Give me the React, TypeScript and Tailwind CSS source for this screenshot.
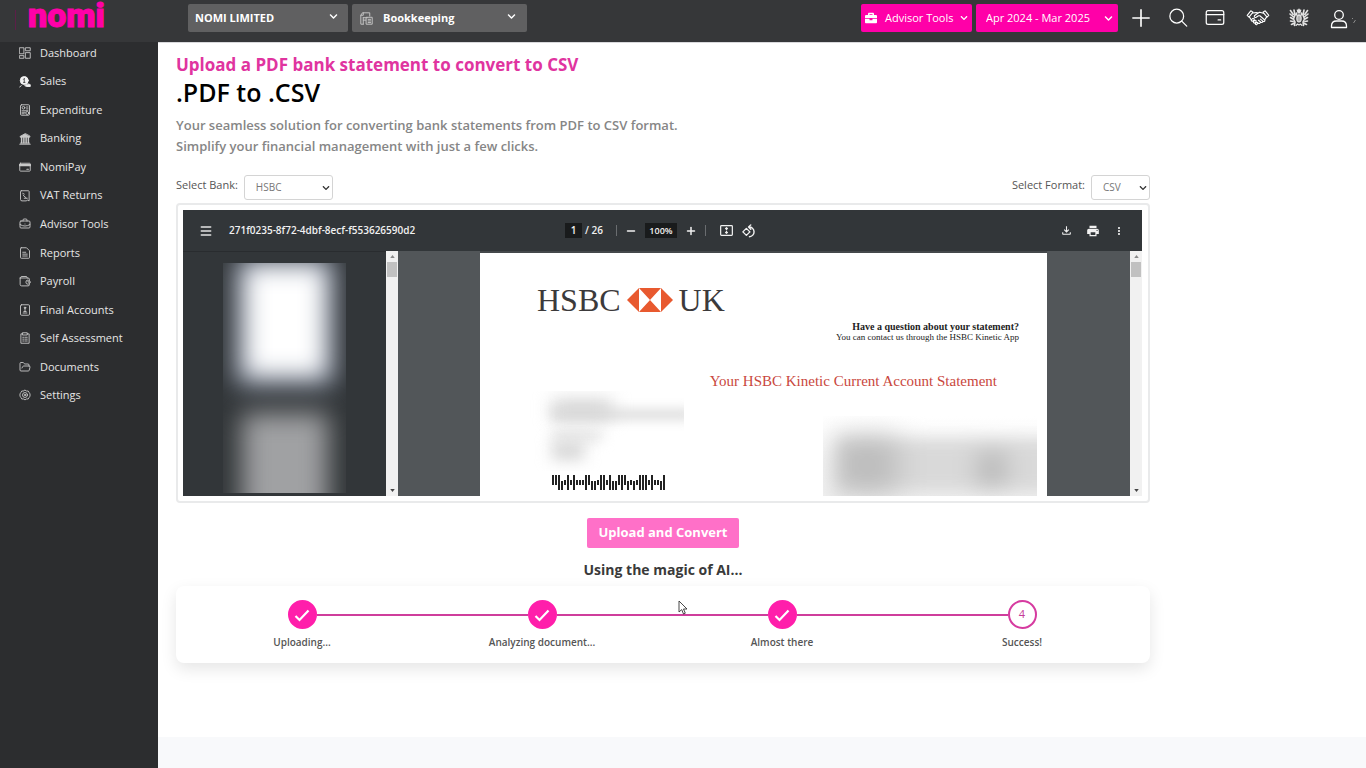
import type { ReactNode } from "react";
import { FaBriefcase, FaChevronDown } from "react-icons/fa";
import { BriefcaseBusiness, FolderOpen, Menu, Minus, Plus } from "lucide-react";
import { MdMoreVert, MdOutlineFileDownload, MdPrint } from "react-icons/md";

function Icon({ children, className = "size-[12px]", sw = 1.2 }: { children: ReactNode; className?: string; sw?: number }) {
  return (
    <svg viewBox="0 0 16 16" className={className} fill="none" stroke="currentColor" strokeWidth={sw} strokeLinecap="round" strokeLinejoin="round" aria-hidden="true">
      {children}
    </svg>
  );
}

const navItems: { label: string; icon: ReactNode }[] = [
  {
    label: "Dashboard",
    icon: (
      <Icon>
        <rect x="1" y="1" width="5.5" height="8" />
        <rect x="1" y="11.5" width="5.5" height="3.5" />
        <rect x="9" y="1" width="6" height="4" />
        <rect x="9" y="7.5" width="6" height="7.5" />
      </Icon>
    ),
  },
  {
    label: "Sales",
    icon: (
      <Icon>
        <circle cx="7" cy="6" r="5.3" fill="#f2f2f2" stroke="#f2f2f2" />
        <path d="M7 3.500v5M6 4.500l1-1M6 8.500h2" stroke="#2c2d2f" strokeWidth="1" />
        <path d="M1 14.500l2-1.500M12 10.500l3 1v2.500h-5l-2-1z" stroke="#f2f2f2" fill="#f2f2f2" />
      </Icon>
    ),
  },
  {
    label: "Expenditure",
    icon: (
      <Icon>
        <rect x="2" y="1" width="12" height="14" rx="1.5" />
        <circle cx="6" cy="5" r="1.8" />
        <path d="M10 4h2M10 6.500h2M4 9h8M4 11h4M4 13h3" />
        <circle cx="11" cy="12" r="2" />
      </Icon>
    ),
  },
  {
    label: "Banking",
    icon: (
      <Icon>
        <path d="M8 1L1.500 4.500v1h13v-1zM2 13.500h12M1 15h14" fill="currentColor" />
        <path d="M3.500 6v7M6.500 6v7M9.500 6v7M12.500 6v7" strokeWidth="2" />
      </Icon>
    ),
  },
  {
    label: "NomiPay",
    icon: (
      <Icon>
        <rect x="1" y="3" width="14" height="10.5" rx="1" />
        <path d="M1 5.500h14" strokeWidth="3" />
        <path d="M10.500 11h2" strokeWidth="1.5" />
      </Icon>
    ),
  },
  {
    label: "VAT Returns",
    icon: (
      <Icon>
        <path d="M3 1h9.500a1 1 0 011 1v12.500l-2-1-2 1H4a2 2 0 01-2-2V2a1 1 0 011-1z" />
        <path d="M5 4.500l2 1M5.500 7l4 3.500M7 11h4" />
      </Icon>
    ),
  },
  { label: "Advisor Tools", icon: <BriefcaseBusiness size={12} strokeWidth={1.8} /> },
  {
    label: "Reports",
    icon: (
      <Icon>
        <path d="M3 1h7l4 4v9a1 1 0 01-1 1H3a1 1 0 01-1-1V2a1 1 0 011-1z" />
        <path d="M5 7h4M5 9.500h6M5 12h6" />
      </Icon>
    ),
  },
  {
    label: "Payroll",
    icon: (
      <Icon>
        <path d="M1.500 4h10.500a2 2 0 012 2v1M1.500 4v8.500a2 2 0 002 2H12a2 2 0 002-2V12M2 4l1-2h7l1 2" />
        <circle cx="12" cy="9.5" r="2.8" />
        <path d="M12 8.500v1h1" />
      </Icon>
    ),
  },
  {
    label: "Final Accounts",
    icon: (
      <Icon>
        <rect x="2" y="1" width="12" height="14" rx="1.5" />
        <circle cx="8" cy="5" r="1" fill="currentColor" />
        <path d="M8 6v4M5.500 12h5M6.500 10h3" />
      </Icon>
    ),
  },
  {
    label: "Self Assessment",
    icon: (
      <Icon>
        <path d="M5 2.500H2.500v12.500h11V2.500H11M5 1h6v3H5z" />
        <path d="M5 7h1.500M8 7h3M5 9.500h1.500M8 9.500h3M5 12h1.500M8 12h3" />
      </Icon>
    ),
  },
  { label: "Documents", icon: <FolderOpen size={12} strokeWidth={1.8} /> },
  {
    label: "Settings",
    icon: (
      <Icon>
        <path d="M8 1.500l2 1.200 2.300 0 1.200 2 1.200 1.800v3l-1.200 1.800-1.200 2H10L8 14.500l-2-1.200H3.700l-1.200-2L1.300 9.500v-3l1.200-1.800 1.200-2H6z" />
        <circle cx="8" cy="8" r="3.3" />
        <circle cx="8" cy="8" r="1" />
      </Icon>
    ),
  },
];

function Chevron({ className }: { className: string }) {
  return <FaChevronDown aria-hidden="true" className={`pointer-events-none absolute ${className}`} />;
}

function Logo() {
  return (
    <a href="#home" aria-label="nomi home" className="ml-[12px]">
      <svg viewBox="0 0 80 34" className="h-[34px] w-[80px] overflow-visible">
        <text x="0" y="27" fill="#ff00a8" stroke="#ff00a8" strokeWidth="1" className="font-['Roboto'] text-[34px] font-black">
          nomi
        </text>
      </svg>
    </a>
  );
}

function Header() {
  return (
    <header className="flex h-[42px] items-start bg-[#363739] text-[11px] text-white">
      <div className="flex w-[188px] shrink-0 items-start pl-[15px]">
        <span className="mt-[10px] h-5 w-px bg-[#5c1f48]" />
        <Logo />
      </div>
      <div className="flex gap-1 pt-1">
        <div className="relative">
          <select aria-label="Company" className="block h-7 w-[160px] appearance-none rounded-[2px] bg-[#606061] px-[7px] text-[11px] font-bold">
            <option>NOMI LIMITED</option>
          </select>
          <Chevron className="top-[8px] right-[10px] size-[9px]" />
        </div>
        <div className="relative">
          <Icon className="pointer-events-none absolute top-[8px] left-[8px] size-[13px] text-[#c4c4c4]">
            <path d="M4 15H1V4l2-3h9v4M1 4h3V1M4 7h5M4 10h3M4 7v8" />
            <rect x="8" y="6.5" width="7" height="8.5" />
            <path d="M10 9h3M10 11h3M10 13h3" />
          </Icon>
          <select aria-label="Module" className="block h-7 w-[175px] appearance-none rounded-[2px] bg-[#606061] pl-[31px] text-[11px] font-bold">
            <option>Bookkeeping</option>
          </select>
          <Chevron className="top-[8px] right-[11px] size-[9px]" />
        </div>
      </div>
      <div className="ml-auto flex gap-1 pt-1 pr-[6px]">
        <button type="button" className="flex h-7 w-[111px] items-center rounded-[2px] bg-[#ff00a8] pl-[4px]">
          <FaBriefcase className="size-[12px]" />
          <span className="ml-2 whitespace-nowrap">Advisor Tools</span>
          <FaChevronDown className="ml-auto mr-[4px] size-[8px]" />
        </button>
        <div className="relative">
          <select aria-label="Period" className="block h-7 w-[142px] appearance-none rounded-[2px] bg-[#ff00a8] px-[10px] text-[11px]">
            <option>Apr 2024 - Mar 2025</option>
          </select>
          <Chevron className="top-[10px] right-[5px] size-[9px]" />
        </div>
        <div className="flex">
          <button type="button" aria-label="Add" className="flex h-7 w-[37px] items-center justify-center">
            <Icon className="size-[20px]" sw={1.3}><path d="M8 1.500v13M1.500 8h13" /></Icon>
          </button>
          <button type="button" aria-label="Search" className="flex h-7 w-[37px] items-center justify-center">
            <Icon className="size-[20px]" sw={1}><circle cx="7" cy="6.5" r="5.5" /><path d="M11 10.500l4 4" /></Icon>
          </button>
          <button type="button" aria-label="Payments" className="flex h-7 w-[37px] items-center justify-center">
            <Icon className="size-[20px]" sw={1}><rect x="1" y="2" width="14" height="11" rx="1.5" /><path d="M1 5.200h14M10.500 9.500h2" /></Icon>
          </button>
        </div>
        <div className="flex">
          <button type="button" aria-label="Partners" className="flex h-7 w-[41px] items-center justify-center">
            <svg viewBox="0 0 26 20" className="h-[18px] w-[24px]" fill="none" stroke="currentColor" strokeWidth="1.2" strokeLinejoin="round" strokeLinecap="round">
              <path d="M5 2L1 7l2 2 4.500-5.500zM21 2l4 5-2 2-4.500-5.500z" />
              <path d="M7 4.500l4-.5 2 .5 2-1 4 1.200M3.500 9l2 3M22.500 9l-2 3" />
              <path d="M13 4.500L9 7.500c-.5 1.500.8 2.300 2 1.700l2.500-1.700h1.500l5.500 4.700c.8 1.400-.8 2.300-1.800 1.500l-3-2.400M18 13.200c.8 1.500-.8 2.300-1.800 1.500l-2.700-2.200M15.500 14.200c.5 1.500-1 2.500-2.200 1.600l-1.300-1" />
              <path d="M5.500 12l1.700-1.500c1.200-.6 2.200.6 1.400 1.600l-1 1.200c-1 .6-2.500-.3-2.100-1.300zM8 14l1.500-1.300c1.200-.5 2 .7 1.200 1.600l-1 1.200c-1 .5-2.200-.5-1.700-1.500zM10.300 16l1-.9c1.200-.4 1.800.7 1 1.500l-.8.8c-.9.400-1.700-.500-1.200-1.400z" />
            </svg>
          </button>
          <button type="button" aria-label="HMRC" className="flex h-7 w-[41px] items-center justify-center">
            <svg viewBox="0 0 20 20" className="size-[20px]" fill="none" stroke="#e4e4e4" strokeWidth="1.1" strokeLinecap="round" strokeLinejoin="round">
              <path d="M9 4.500l-.8-2.500 1.100.8L10 1l.7 1.800 1.100-.8L11 4.500z" fill="#e4e4e4" />
              <ellipse cx="10" cy="10.5" rx="2.2" ry="3.4" fill="#b0b0b0" />
              <path d="M9 6h2" />
              <path d="M1.500 2.500l2.700 4M1 6l3 2.500M1.500 9.500l2.500 1.500M1.500 13l2.500.5M2.500 16.500l3-1.500M5 2l1 5M6 7l-1.500 4 1.500 3-.5 3.500M7.500 5v2" strokeWidth="1.6" />
              <path d="M18.500 2.500l-2.700 4M19 6l-3 2.500M18.500 9.500l-2.500 1.500M18.500 13l-2.500.5M17.500 16.500l-3-1.500M15 2l-1 5M14 7l1.500 4-1.500 3 .5 3.500M12.500 5v2" strokeWidth="1.600" />
              <path d="M7 17.500l1.500-1.500 1.500 1 1.500-1 1.500 1.500" />
            </svg>
          </button>
          <button type="button" aria-label="Account" className="flex h-7 w-[41px] items-center pt-[2px] pl-[11px]">
            <svg viewBox="0 0 27 20" className="h-[20px] w-[27px] shrink-0" fill="none" stroke="currentColor" strokeWidth="1.3" strokeLinejoin="round">
              <circle cx="9" cy="6" r="4.3" />
              <path d="M1.500 18.500v-1.500c0-3.500 2.500-5 5-5h5c2.500 0 5 1.500 5 5v1.500z" />
              <path d="M22 9l1 1M25.500 11l-2 3" stroke="#8c8c8c" strokeWidth="1" />
            </svg>
          </button>
        </div>
      </div>
    </header>
  );
}

function Sidebar() {
  return (
    <nav className="w-[158px] shrink-0 bg-[#2c2d2f] pt-px">
      <ul className="grid h-[371px] auto-rows-fr">
        {navItems.map((item) => (
          <li key={item.label}>
            <a href="#nav" className="flex h-5 items-center gap-[9px] pl-[19px] text-[11px] font-medium text-[#e6e6e6]">
              <span className="text-[#c8c8c8]">{item.icon}</span>
              {item.label}
            </a>
          </li>
        ))}
      </ul>
    </nav>
  );
}

function Field({ id, label, value, width }: { id: string; label: string; value: string; width: string }) {
  return (
    <div className="flex items-center gap-[6px]">
      <label htmlFor={id} className="pb-1 text-[11px] text-[#555]">{label}</label>
      <div className="relative">
        <select id={id} className={`block h-[25px] appearance-none rounded-[3px] border border-[#d4d4d4] bg-white pl-[11px] text-[10px] text-[#777] ${width}`}>
          <option>{value}</option>
        </select>
        <Chevron className="top-[9px] right-[3px] size-[8px] text-[#333]" />
      </div>
    </div>
  );
}

function Scrollbar() {
  return (
    <div className="flex w-[12px] shrink-0 flex-col items-center bg-[#f1f1f1] py-1">
      <svg viewBox="0 0 6 4" className="h-[3px] w-[5px] shrink-0" fill="#8a8a8a"><path d="M0 4L3 0l3 4z" /></svg>
      <div className="mt-1 h-[15px] w-[10px] bg-[#c1c1c1]" />
      <svg viewBox="0 0 6 4" className="mt-auto h-[3px] w-[5px] shrink-0" fill="#444"><path d="M0 0l3 4 3-4z" /></svg>
    </div>
  );
}

function PdfToolbar() {
  return (
    <div className="grid h-[41px] grid-cols-[1fr_auto_1fr] items-center bg-[#323639] text-[10px] font-semibold text-[#f1f1f1]">
      <div className="flex items-center gap-[16px] pl-[16px]">
        <button type="button" aria-label="Menu" className="text-[#e4e4e4]"><Menu size={14} strokeWidth={2.6} /></button>
        <span className="whitespace-nowrap">271f0235-8f72-4dbf-8ecf-f553626590d2</span>
      </div>
      <div className="flex items-center pr-[4px]">
        <input aria-label="Page" defaultValue="1" className="h-[15px] w-[17px] bg-[#191b1c] text-center" />
        <span className="ml-[3px]">/ 26</span>
        <span className="ml-[13px] h-[11px] w-px bg-[#6a6d70]" />
        <button type="button" aria-label="Zoom out" className="ml-2"><Minus size={12} strokeWidth={3} /></button>
        <input aria-label="Zoom" defaultValue="100%" className="ml-2 h-[15px] w-[32px] bg-[#191b1c] text-center text-[9px]" />
        <button type="button" aria-label="Zoom in" className="ml-2"><Plus size={12} strokeWidth={3} /></button>
        <span className="ml-2 h-[11px] w-px bg-[#6a6d70]" />
        <button type="button" aria-label="Fit to page" className="ml-[13px]">
          <Icon className="h-[13px] w-[15px]" sw={1.5}><rect x="0.8" y="2" width="14.4" height="12" rx="1" /><path d="M8 4.500v2.500M6.800 5.700L8 4.500l1.200 1.200M8 11.500V9M6.800 10.300L8 11.500l1.200-1.200" /></Icon>
        </button>
        <button type="button" aria-label="Rotate" className="ml-2">
          <Icon className="size-[14px]" sw={1.6}><path d="M5 5L9 9l-4 4-4-4z" /><path d="M8 3.500a5.500 5.500 0 11.500 11M10 1L7.500 3.500 10 6" /></Icon>
        </button>
      </div>
      <div className="flex items-center justify-end gap-[13px] pr-[17px]">
        <button type="button" aria-label="Download"><MdOutlineFileDownload size={13} /></button>
        <button type="button" aria-label="Print"><MdPrint size={14} /></button>
        <button type="button" aria-label="More"><MdMoreVert size={12} /></button>
      </div>
    </div>
  );
}

// Bar shapes: f full, t tall upper, b lower, s short
const bars = "ttfbsfsfsssftbbsffsfbbtftbsbsfffsfssbfff".slice(0, 38).split("");

function Barcode() {
  return (
    <svg viewBox="0 0 114 16" className="ml-[72px] h-[16px] w-[114px]" aria-hidden="true">
      {bars.map((b, i) => {
        const y = b === "f" || b === "t" ? 0 : b === "b" ? 6 : 5;
        const h = b === "f" ? 15 : b === "t" ? 10 : b === "b" ? 9 : 5;
        return <rect key={i} x={i * 3} y={y} width="2" height={h} fill="#222" />;
      })}
    </svg>
  );
}

function StatementPage() {
  return (
    <div className="min-w-0 flex-[567] overflow-hidden border-t-2 border-[#44484b] bg-white font-['Liberation_Serif',serif]">
      <div className="flex items-center gap-[6px] pt-[29px] pl-[57px] text-[32px] leading-9 text-[#3c3a3b]">
        <span>HSBC</span>
        <svg viewBox="0 0 46 24" className="h-[24px] w-[46px]" aria-label="HSBC emblem">
          <path d="M12 0h22l12 12-12 12H12L0 12z" fill="#e8592f" />
          <path d="M12 0v24l11-12zM34 0v24L23 12z" fill="#fff" />
        </svg>
        <span>UK</span>
      </div>
      <div className="mt-[4px] pr-[28px] text-right text-[9px] leading-[10px] text-[#222]">
        <p className="text-[10px] leading-[10px] font-bold">Have a question about your statement?</p>
        <p>You can contact us through the HSBC Kinetic App</p>
      </div>
      <h2 className="mt-[29px] pr-[50px] text-right text-[15px] leading-5 text-[#c9473d]">Your HSBC Kinetic Current Account Statement</h2>
      <div className="flex justify-between pr-[10px]">
        <div>
          <div className="ml-[50px] h-[80px] w-[154px] overflow-hidden pt-[9px] pl-[22px]">
            <div className="h-[18px] w-[60px] bg-[#d2d2d2] blur-[9px]" />
            <div className="-mt-[8px] h-[9px] w-[140px] bg-[#d6d6d6] blur-[6px]" />
            <div className="mt-[12px] h-[9px] w-[50px] bg-[#dcdcdc] blur-[7px]" />
            <div className="mt-[3px] h-[16px] w-[32px] bg-[#d0d0d0] blur-[8px]" />
          </div>
          <div className="mt-[4px]"><Barcode /></div>
        </div>
        <div className="mt-[25px] h-[82px] w-[214px] overflow-hidden bg-gradient-to-b from-white via-[#f7f7f7] to-[#f1f1f1] pt-[22px]">
          <div className="ml-[14px] flex h-[54px] w-[220px] justify-between bg-[#d9d9d9] pr-[50px] blur-[8px]">
            <div className="h-full w-[60px] bg-[#bcbcbc] blur-[12px]" />
            <div className="mt-[14px] h-[34px] w-[30px] bg-[#bababa] blur-[9px]" />
          </div>
        </div>
      </div>
    </div>
  );
}

function PdfViewer() {
  return (
    <section aria-label="Statement preview" className="mt-[3px] rounded-[4px] border-2 border-[#e9eaeb] p-[5px] pr-[6px]">
      <PdfToolbar />
      <div className="flex h-[245px]">
        <div className="flex w-[203px] shrink-0 flex-col items-center overflow-hidden border-t border-[#292c2f] bg-[#323639]">
          <div className="mt-[11px] flex h-[230px] w-[123px] flex-col items-center overflow-hidden">
            <div className="mt-[4px] h-[108px] w-[78px] shrink-0 bg-white shadow-[0_0_10px_9px_#aab5cc] blur-[12px]" />
            <div className="mt-[38px] h-[120px] w-[86px] shrink-0 bg-[#a0a1a3] blur-[13px]" />
          </div>
        </div>
        <Scrollbar />
        <div className="flex min-w-0 flex-1 bg-[#525659]">
          <div className="flex-[82]" />
          <StatementPage />
          <div className="flex-[83]" />
        </div>
        <Scrollbar />
      </div>
    </section>
  );
}

const steps = [
  { label: "Uploading...", done: true },
  { label: "Analyzing document...", done: true },
  { label: "Almost there", done: true },
  { label: "Success!", done: false },
];

function Stepper() {
  return (
    <ol className="relative mt-[5px] flex rounded-[8px] bg-white pt-[14px] pr-[8px] pb-[13px] pl-[6px] shadow-[0_6px_16px_rgba(0,0,0,0.10)]">
      {steps.map((step, i) => (
        <li key={step.label} className="flex flex-1 flex-col items-center">
          <div className="flex w-full items-center">
            <span className={`h-[2px] flex-1 ${i === 0 ? "bg-transparent" : "bg-[#cf3d9c]"}`} />
            <span className={`flex size-[29px] items-center justify-center rounded-full border-2 text-[11px] ${step.done ? "border-[#ff1fab] bg-[#ff1fab] text-white" : "border-[#d63ba0] bg-white text-[#c63b98]"}`}>
              {step.done ? (
                <svg viewBox="0 0 16 16" className="size-[16px]" fill="none" stroke="currentColor" strokeWidth="2.2" aria-hidden="true"><path d="M1.500 9l4 4L14.500 3.500" /></svg>
              ) : (
                i + 1
              )}
            </span>
            <span className={`h-[2px] flex-1 ${i === steps.length - 1 ? "bg-transparent" : "bg-[#cf3d9c]"}`} />
          </div>
          <span className="mt-[5px] text-[10px] leading-4 font-semibold text-[#555]">{step.label}</span>
        </li>
      ))}
      <svg viewBox="0 0 10 15" className="absolute top-[14px] left-[502px] h-[15px] w-[10px]" aria-hidden="true">
        <path d="M1 1v11l2.700-2.400L5.500 14l1.800-.8L5.500 9H9z" fill="#fff" stroke="#333" strokeWidth="0.9" />
      </svg>
    </ol>
  );
}

export default function App() {
  return (
    <div className="flex min-h-screen flex-col bg-white font-['Open_Sans',sans-serif]">
      <Header />
      <div className="flex flex-1">
        <Sidebar />
        <div className="flex min-w-0 flex-1 flex-col border-t border-[#d9d9dc]">
          <main className="w-full max-w-[992px] pt-[11px] pl-[18px]">
            <p className="text-[17px] leading-[22px] font-bold text-[#e0349f]">Upload a PDF bank statement to convert to CSV</p>
            <h1 className="text-[25px] leading-[32px] font-semibold text-black">.PDF to .CSV</h1>
            <p className="mt-[7px] text-[13px] leading-[21px] font-semibold text-[#868686]">
              Your seamless solution for converting bank statements from PDF to CSV format.
              <br />
              Simplify your financial management with just a few clicks.
            </p>
            <div className="mt-[18px] flex justify-between">
              <Field id="bank" label="Select Bank:" value="HSBC" width="w-[89px]" />
              <Field id="format" label="Select Format:" value="CSV" width="w-[59px]" />
            </div>
            <PdfViewer />
            <div className="mt-[15px] flex flex-col items-center">
              <button type="button" className="h-[30px] rounded-[2px] bg-[#ff70c8] px-[11px] text-[13px] font-bold text-white">Upload and Convert</button>
              <p className="mt-[11px] text-[14px] leading-[22px] font-bold text-[#3a3a3a]">Using the magic of AI...</p>
            </div>
            <Stepper />
          </main>
          <footer className="mt-auto h-[31px] bg-[#f8f9fb]" />
        </div>
      </div>
    </div>
  );
}
